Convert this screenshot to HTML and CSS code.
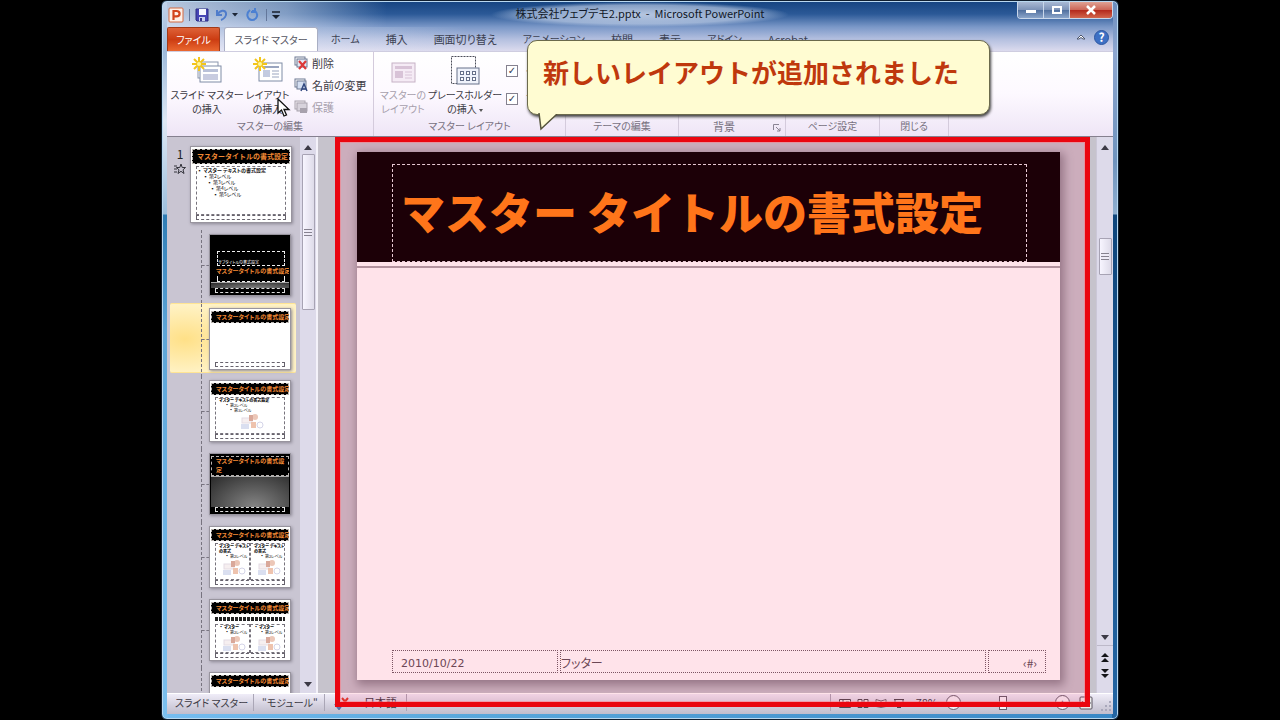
FILE: index.html
```html
<!DOCTYPE html>
<html lang="ja">
<head>
<meta charset="utf-8">
<title>株式会社ウェブデモ2.pptx - Microsoft PowerPoint</title>
<link rel="stylesheet" href="styles.css">
</head>
<body>
<svg class="defs" width="0" height="0" aria-hidden="true">
  <defs>
    <g id="burst" stroke="#f2c51c" stroke-width="2"><path d="M6 -1V13M-1 6H13M1 1L11 11M11 1L1 11"/><circle cx="6" cy="6" r="2" fill="#fff79a" stroke="none"/></g>
    <g id="pics"><rect x="2" y="5" width="10" height="5" fill="#f6eff0" stroke="#e4dbe3"/><circle cx="15" cy="4" r="3" fill="#ecc7b8"/><rect x="9" y="2" width="4" height="6" fill="#d9a89a"/><rect x="1" y="11" width="8" height="5" fill="#dadff0"/><rect x="11" y="9" width="5" height="6" fill="#eec3ae"/><circle cx="20" cy="12" r="3" fill="none" stroke="#d4d4e8"/></g>
  </defs>
</svg>
<div class="window">
  <header class="titlebar">
    <div class="quick">
      <svg width="16" height="16" viewBox="0 0 16 16"><rect x="1" y="1" width="14" height="14" rx="1" fill="#fdf0e8" stroke="#d36a42"/><path d="M5.500 13V4H8.500C12.600 4 12.600 9.300 8.500 9.300H5.500" fill="none" stroke="#d2441c" stroke-width="2.200"/></svg>
      <i class="bar"></i>
      <button class="plain" aria-label="上書き保存"><svg width="14" height="14" viewBox="0 0 14 14"><path d="M1 1H13V13H2L1 12Z" fill="#4545b5" stroke="#2d2c83"/><rect x="4" y="1" width="7" height="6" fill="#f4f6ff"/><rect x="4" y="9" width="6" height="4" fill="#c8d0ef"/><rect x="5" y="10" width="2" height="3" fill="#35358e"/></svg></button>
      <button class="plain undo" aria-label="元に戻す"><svg width="22" height="14" viewBox="0 0 22 14"><path d="M1 2V7H6M1.500 6.500C4 2 9 1.500 10 5C10.800 8 8 11 5 12" fill="none" stroke="#4f7ccb" stroke-width="2"/><path d="M16 5H22L19 8.500Z" fill="#1d2636"/></svg></button>
      <button class="plain redo" aria-label="繰り返し"><svg width="13" height="14" viewBox="0 0 13 14"><path d="M4 2C-1 6 2 12 6 12C11 12 13 6 9 3L6 3M9 0V4H5" fill="none" stroke="#4c80d2" stroke-width="2"/></svg></button>
      <i class="bar"></i>
      <svg width="8" height="10" viewBox="0 0 8 10"><path d="M0 2H8" stroke="#18202e" stroke-width="1.500"/><path d="M0 5H8L4 9Z" fill="#18202e"/></svg>
    </div>
    <h1>株式会社ウェブデモ2.pptx&nbsp; - &nbsp;Microsoft PowerPoint</h1>
    <div class="controls">
      <button aria-label="最小化"><svg width="12" height="10" viewBox="0 0 12 10"><rect x="1" y="5" width="10" height="3" fill="#fff"/></svg></button>
      <button aria-label="最大化"><svg width="12" height="10" viewBox="0 0 12 10"><rect x="2" y="2" width="8" height="6" fill="none" stroke="#fff" stroke-width="2"/></svg></button>
      <button class="close" aria-label="閉じる"><svg width="12" height="10" viewBox="0 0 12 10"><path d="M2 1L10 9M10 1L2 9" stroke="#fff" stroke-width="2.500"/></svg></button>
    </div>
  </header>
  <nav class="tabs">
    <button class="file">ファイル</button>
    <button class="tab active">スライド マスター</button>
    <button class="tab">ホーム</button>
    <button class="tab kanji">挿入</button>
    <button class="tab kanji">画面切り替え</button>
    <button class="tab">アニメーション</button>
    <button class="tab kanji">校閲</button>
    <button class="tab kanji">表示</button>
    <button class="tab">アドイン</button>
    <button class="tab kanji">Acrobat</button>
    <span class="tabtools">
      <button class="plain" aria-label="リボンの最小化"><svg width="10" height="8" viewBox="0 0 10 8"><path d="M1 6L5 2L9 6H7L5 4.500L3 6Z" fill="#fff" stroke="#4d566c"/></svg></button>
      <button class="help" aria-label="ヘルプ">?</button>
    </span>
  </nav>
  <section class="ribbon">
    <div class="group g-edit">
      <div class="tools">
        <button class="big b1"><svg width="32" height="28" viewBox="0 0 32 28"><rect x="7" y="5" width="20" height="16" fill="#fff" stroke="#8a96ad"/><rect x="9" y="9" width="21" height="16" fill="#fff" stroke="#7f8ca6"/><rect x="12" y="12" width="15" height="3" fill="#b9c1d8"/><rect x="12" y="17" width="15" height="6" fill="#c8cce0"/><use href="#burst" x="2" y="1"/></svg><span>スライド マスター<br>の挿入</span></button>
        <button class="big b2"><svg width="32" height="28" viewBox="0 0 32 28"><rect x="7" y="6" width="23" height="18" fill="#fff" stroke="#7f8ca6"/><path d="M11 10H27" stroke="#9aa5bf" stroke-width="2"/><rect x="11" y="13" width="7" height="7" fill="#c3cbe0"/><path d="M20 14H27M20 17H27M20 20H27" stroke="#9aa5bf"/><use href="#burst" x="2" y="1"/></svg><span>レイアウト<br>の挿入</span></button>
        <div class="smalls">
          <button class="small"><svg width="14" height="14" viewBox="0 0 14 14"><rect x="1" y="1" width="10" height="8" fill="#fff" stroke="#6d7892"/><rect x="3" y="3" width="10" height="8" fill="#e3e9f5" stroke="#6d7892"/><path d="M5 5L12 13M12 5L5 13" stroke="#dc3838" stroke-width="2.200"/></svg>削除</button>
          <button class="small"><svg width="14" height="14" viewBox="0 0 14 14"><rect x="1" y="1" width="10" height="8" fill="#fff" stroke="#6d7892"/><rect x="3" y="3" width="9" height="8" fill="#d4dff2" stroke="#6d7892"/><path d="M7 13L10 6L13 13M8 11H12" fill="none" stroke="#354b82" stroke-width="1.500"/></svg>名前の変更</button>
          <button class="small" disabled><svg width="14" height="14" viewBox="0 0 14 14"><rect x="1" y="1" width="10" height="8" fill="#eee9ef" stroke="#a9a3ae"/><rect x="3" y="3" width="10" height="8" fill="#d8d3dc" stroke="#a9a3ae"/><rect x="6" y="8" width="7" height="5" fill="#a8a2ad"/></svg>保護</button>
        </div>
      </div>
      <h2>マスターの編集</h2>
    </div>
    <div class="group g-layout">
      <div class="tools">
        <button class="big b3" disabled><svg width="32" height="28" viewBox="0 0 32 28"><rect x="5" y="6" width="23" height="19" fill="#f5ebf5" stroke="#c6b2c6"/><rect x="8" y="9" width="17" height="3" fill="#d8c3d7"/><rect x="8" y="14" width="8" height="7" fill="#d8c3d7"/><path d="M18 15H25M18 18H25M18 21H25" stroke="#d8c3d7"/></svg><span>マスターの<br>レイアウト</span></button>
        <button class="big b4"><svg width="32" height="32" viewBox="0 0 32 32"><rect x="2.500" y="1.500" width="24" height="27" fill="none" stroke="#4b4d58" stroke-dasharray="2 1"/><rect x="8" y="13" width="22" height="16" fill="#eff2fb" stroke="#66708a"/><g fill="#fff" stroke="#66708a"><rect x="11.500" y="16.500" width="3" height="3"/><rect x="17.500" y="16.500" width="3" height="3"/><rect x="23.500" y="16.500" width="3" height="3"/><rect x="11.500" y="22.500" width="3" height="3"/><rect x="17.500" y="22.500" width="3" height="3"/><rect x="23.500" y="22.500" width="3" height="3"/></g></svg><span>プレースホルダー<br>の挿入 <b class="drop"></b></span></button>
        <div class="checks">
          <label><input type="checkbox" checked>タイトル</label>
          <label><input type="checkbox" checked>フッター</label>
        </div>
      </div>
      <h2>マスター レイアウト</h2>
    </div>
    <div class="group g-theme"><h2>テーマの編集</h2></div>
    <div class="group g-back"><h2>背景</h2><svg class="launcher" width="8" height="8" viewBox="0 0 8 8"><path d="M.5 6V.5H6M3 3L7 7M7 4V7H4" fill="none" stroke="#8a8494"/></svg></div>
    <div class="group g-page"><h2>ページ設定</h2></div>
    <div class="group g-close"><h2>閉じる</h2></div>
  </section>
  <main class="work">
    <aside class="pane">
      <ol class="list">
        <li class="master">
          <div class="num">1<svg width="12" height="12" viewBox="0 0 12 12"><path d="M7 1L8.200 4.500H11.500L9 6.800L10 10.500L7 8.300L4 10.500L5 6.800L2.500 4.500H5.800Z" fill="none" stroke="#33333b"/><path d="M0 3H3M0 6H3M0 9H3" stroke="#33333b"/></svg></div>
          <div class="thumb large">
            <div class="cap">マスタータイトルの書式設定</div>
            <div class="body dash">▪ マスター テキストの書式設定<p>▪ 第2レベル</p><p class="i2">▪ 第3レベル</p><p class="i3">▪ 第4レベル</p><p class="i4">▪ 第5レベル</p></div>
            <div class="foot"></div>
          </div>
        </li>
        <li><i class="tree"></i><div class="thumb dark first"><div class="box dash"><small>サブタイトルの書式設定</small></div><div class="cap low">マスタータイトルの書式設定</div><div class="under"></div><div class="grey"></div><div class="foot"></div></div></li>
        <li class="selected"><i class="tree"></i><div class="thumb"><div class="cap">マスタータイトルの書式設定</div><div class="body"></div><div class="foot"></div></div></li>
        <li><i class="tree"></i><div class="thumb"><div class="cap">マスタータイトルの書式設定</div><div class="body dash mini"><b>マスター テキストの書式設定</b><p>▪ 第2レベル</p><p class="i2">▪ 第3レベル</p><svg class="pic" width="24" height="16" viewBox="0 0 24 16"><use href="#pics"/></svg></div><div class="foot"></div></div></li>
        <li><i class="tree"></i><div class="thumb dark"><div class="cap two">マスタータイトルの書式設定</div><div class="grey"></div><div class="foot"></div></div></li>
        <li><i class="tree"></i><div class="thumb"><div class="cap">マスタータイトルの書式設定</div><div class="pair"><div class="body dash mini"><b>マスター テキスト<br>の書式</b><p>▪ 第2レベル</p><svg class="pic" width="24" height="16" viewBox="0 0 24 16"><use href="#pics"/></svg></div><div class="body dash mini"><b>マスター テキスト<br>の書式</b><p>▪ 第2レベル</p><svg class="pic" width="24" height="16" viewBox="0 0 24 16"><use href="#pics"/></svg></div></div><div class="foot"></div></div></li>
        <li><i class="tree"></i><div class="thumb"><div class="cap">マスタータイトルの書式設定</div><div class="rule"></div><div class="pair"><div class="body dash mini"><b>▪ マスター</b><p>▪ 第2レベル</p><svg class="pic" width="24" height="16" viewBox="0 0 24 16"><use href="#pics"/></svg></div><div class="body dash mini"><b>▪ マスター</b><p>▪ 第2レベル</p><svg class="pic" width="24" height="16" viewBox="0 0 24 16"><use href="#pics"/></svg></div></div><div class="foot"></div></div></li>
        <li><i class="tree"></i><div class="thumb"><div class="cap">マスタータイトルの書式設定</div><div class="body"></div></div></li>
      </ol>
      <div class="scroll left"><i class="up"></i><i class="knob"><i class="grip"></i></i><i class="down"></i></div>
    </aside>
    <section class="stage">
      <article class="slide">
        <div class="banner"><div class="title">マスター タイトルの書式設定</div></div>
        <div class="content"></div>
        <footer class="fields"><span class="date">2010/10/22</span><span class="footer">フッター</span><span class="page">‹#›</span></footer>
      </article>
    </section>
    <div class="scroll right"><i class="up"></i><i class="knob"><i class="grip"></i></i><i class="down"></i><span class="jump"><svg width="10" height="28" viewBox="0 0 10 28"><path d="M1 5L5 1L9 5ZM1 10L5 6L9 10ZM1 17H9L5 21ZM1 22H9L5 26Z" fill="#141418"/></svg></span></div>
  </main>
  <footer class="status">
    <span class="cell s1">スライド マスター</span>
    <span class="cell s2">"モジュール"</span>
    <span class="cell s3"><svg width="18" height="14" viewBox="0 0 18 14"><path d="M2 8L6 13L9 9" fill="none" stroke="#5570a8" stroke-width="2"/><path d="M9 2L15 9M15 2L9 9" stroke="#dc3c2c" stroke-width="2"/></svg>日本語</span>
    <span class="fill"></span>
    <span class="views">
      <svg width="12" height="10" viewBox="0 0 12 10"><path d="M.5 1.500H11.500V9.500H.5ZM4 2V9M7 4H10" fill="#eee" stroke="#4f4953"/></svg>
      <svg width="12" height="10" viewBox="0 0 12 10"><path d="M1 1.500H5V4.500H1ZM7 1.500H11V4.500H7ZM1 6.500H5V9.500H1ZM7 6.500H11V9.500H7Z" fill="#eee" stroke="#4f4953"/></svg>
      <svg width="12" height="10" viewBox="0 0 12 10"><path d="M1 1.500L6 3L11 1.500V8.500L6 9.500L1 8.500ZM6 3V9" fill="#eee" stroke="#6f6973"/></svg>
      <svg width="12" height="10" viewBox="0 0 12 10"><path d="M1 1.500H11M2 2V6.500H10V2M6 7V10M4 9.500H8" fill="none" stroke="#4f4953"/></svg>
    </span>
    <span class="pct">78%</span>
    <button class="round" aria-label="縮小">−</button>
    <input class="zoom" type="range" min="0" max="100" value="43" aria-label="ズーム">
    <button class="round" aria-label="拡大">+</button>
    <svg width="14" height="14" viewBox="0 0 14 14"><rect x="1" y="1" width="12" height="12" rx="1" fill="#eee" stroke="#5b5561"/><path d="M3 5L5 7L3 9M6 7H12M9 3V11" fill="none" stroke="#5b5561"/></svg>
    <svg class="sizer" width="12" height="12" viewBox="0 0 12 12"><path d="M9 2h2v2h-2zM9 6h2v2h-2zM5 6h2v2h-2zM9 10h2v2h-2zM5 10h2v2h-2zM1 10h2v2h-2z" fill="#a9a8bb"/></svg>
  </footer>
  <div class="highlight"></div>
  <div class="callout">新しいレイアウトが追加されました<svg class="tail" width="30" height="19" viewBox="0 0 30 19"><path d="M7 0L9 16L25 1" fill="#fffcd2" stroke="#55543c" stroke-width="1.500"/><path d="M8 0H25V1H8Z" fill="#fffcd2"/></svg></div>
  <svg class="pointer" width="14" height="20" viewBox="0 0 14 20"><path d="M1 1V15L4.500 12L7 18L9.500 17L7 11.500H12Z" fill="#fff" stroke="#111" stroke-width="1.300"/></svg>
</div>
</body>
</html>
```

FILE: styles.css
```css
* { box-sizing: border-box; }
body { margin: 0; padding: 0 161px; background: #000; color: #3c3a44; font-family: "Noto Sans CJK JP", sans-serif; font-size: 12px; line-height: 14px; font-feature-settings: "palt"; }
button { font: inherit; font-feature-settings: inherit; color: inherit; border: 0; padding: 0; background: none; white-space: nowrap; }
h1, h2, p, ol { margin: 0; padding: 0; font-weight: normal; }
svg { display: block; flex: none; }
i { display: block; }
.defs { position: absolute; }
.window { position: relative; height: 100vh; display: flex; flex-direction: column; padding: 1px 5px 5px; border: 1px solid #101f30; border-radius: 6px; overflow: hidden;
  box-shadow: inset 0 0 0 1px #b9d8f0;
  background:
    linear-gradient(#c3d3ea, #9db9da 50px, #dfe8f4 120px, #9dbfdd 213px, #2e7cb4 214px, #5da5d8 330px, #7cc0ef) left / 6px 100% no-repeat,
    linear-gradient(#6a8cbd, #8ea7d0 50px, #6f93bd 160px, #8fafd0 213px, #0f467c 214px, #2365a3) right / 6px 100% no-repeat,
    linear-gradient(90deg, #76bdf0, #59a8dc 300px, #3988c6); }

.titlebar { display: grid; grid-template-columns: 1fr auto 1fr; height: 25px; flex: none; background: linear-gradient(90deg, rgba(235,240,250,.75), rgba(215,225,242,.5) 120px, transparent 220px), linear-gradient(#174582, #2b5997 12px, #7b98c8); }
.quick { display: flex; align-items: center; gap: 5px; padding-left: 1px; }
.quick .bar { width: 1px; height: 12px; background: #63779b; }
.quick .undo { margin-left: 2px; }
.quick .redo { margin: 0 2px 0 3px; }
.titlebar h1 { font-size: 11px; line-height: 22px; color: #111827; white-space: nowrap; background: radial-gradient(closest-side, rgba(205,216,236,.85), rgba(190,205,230,.65) 75%, transparent); padding: 0 24px; }
.controls { justify-self: end; display: flex; height: 17px; width: 96px; border: 1px solid #c9d7ea; border-top: 0; border-radius: 0 0 4px 4px; overflow: hidden; }
.controls button { width: 26px; display: grid; place-items: center; border-right: 1px solid #c9d7ea; background: linear-gradient(#a9b9d4, #7b91b6 50%, #506f9e 51%, #8ba5ca); }
.controls .close { flex: 1; border: 0; background: linear-gradient(#e0a294, #cc6455 50%, #b3281b 51%, #d2664d); }

.tabs { display: flex; height: 24px; flex: none; background: linear-gradient(90deg, rgba(235,240,250,.6), transparent 300px), linear-gradient(#7b98c8, #b3bfdf 12px, #dcdbee); }
.file { width: 53px; margin-right: 4px; color: #fff; border-radius: 2px 2px 0 0; border: 1px solid #a23a18; border-bottom: 0; background: linear-gradient(#de6238, #cc3c12 50%, #ea6830); font-size: 10px; }
.tab { padding: 0 13px; font-size: 10px; line-height: 20px; color: #3c4152; }
.tab.kanji { font-size: 11px; }
.tab.active { width: 94px; padding: 0; background: #fff; border: 1px solid #a9afc4; border-bottom: 0; border-radius: 3px 3px 0 0; color: #555662; }
.tabtools { margin-left: auto; display: flex; align-items: center; gap: 8px; padding: 0 4px 4px 0; }
.help { width: 15px; height: 15px; border-radius: 50%; background: #3d70c4; border: 1px solid #2c57a2; color: #fff; font-weight: bold; line-height: 12px; }

.ribbon { display: flex; height: 86px; flex: none; background: linear-gradient(#fff, #fdf9ff 50%, #eee5f6); border-bottom: 1px solid #85808f; border-top: 1px solid #cfcde0; }
.group { display: flex; flex-direction: column; justify-content: flex-end; border-right: 1px solid #d4cbdc; position: relative; }
.group h2 { text-align: center; font-size: 10px; line-height: 20px; color: #77717f; }
.g-edit { width: 207px; } .g-layout { width: 192px; } .g-theme { width: 113px; } .g-back { width: 107px; } .g-page { width: 94px; } .g-close { width: 69px; }
.g-back h2 { font-size: 11px; padding-right: 16px; }
.launcher { position: absolute; right: 4px; bottom: 4px; }
.tools { display: flex; flex: 1; padding-top: 3px; }
.big { display: flex; flex-direction: column; align-items: center; font-size: 10px; line-height: 14px; }
.big svg { height: 32px; margin-bottom: 1px; }
.b1 { width: 80px; } .b2 { width: 41px; } .b3 { width: 56px; } .b4 { width: 68px; }
.g-layout .tools { padding-left: 1px; }
.drop { display: inline-block; border: 2px solid transparent; border-top: 3px solid #555; border-bottom: 0; vertical-align: middle; }
button:disabled { color: #a79fac; }
.smalls { display: flex; flex-direction: column; gap: 6px; padding-left: 6px; }
.small { display: flex; align-items: center; gap: 4px; font-size: 11px; line-height: 16px; }
.checks { display: flex; flex-direction: column; gap: 14px; padding: 9px 0 0 6px; }
.checks label { display: flex; align-items: center; gap: 7px; white-space: nowrap; font-size: 10px; }
.checks input { appearance: none; width: 12px; height: 12px; margin: 1px; border: 1px solid #85818f; background: #fff; display: grid; place-items: center; }
.checks input::before { content: "✓"; font: bold 10px/10px "DejaVu Sans", sans-serif; color: #333a50; }

.work { display: flex; flex: 1; min-height: 0; background: #c9c5d2; }
.pane { display: flex; width: 151px; border-right: 2px solid #f4f2fa; }
.list { list-style: none; flex: 1; min-width: 0; overflow: hidden; padding: 0 4px 0 3px; }
.list li { display: grid; grid-template-columns: 31px 8px 82px; height: 70px; margin-bottom: 3px; align-items: start; }
.list li.master { display: flex; height: 90px; margin-bottom: 3px; }
.num { width: 20px; display: flex; flex-direction: column; align-items: center; gap: 2px; padding: 10px 0 0; color: #222; }
.list li.selected { background: radial-gradient(ellipse 60px 34px at 15px 35px, #ffe087, transparent), #fff2c4; border: 2px solid #ffe594; border-width: 1px 0; border-radius: 2px; }
.tree { grid-column: 2; height: 73px; border-left: 1px dashed #77737f; }
.tree::before { content: ""; display: block; height: 35px; border-bottom: 1px dashed #77737f; }
.thumb { width: 82px; height: 62px; margin-top: 4px; padding: 2px 1px; overflow: hidden; background: #fff; border: 1px solid #98949e; box-shadow: 1px 1px 3px #8b8794; display: flex; flex-direction: column; }
.thumb.large { width: 102px; height: 77px; margin-top: 9px; }
.cap { height: 12px; flex: none; padding-left: 1px; border-left: 4px solid #000; color: #f28a35; background: #000; outline: 1px dashed #b9b4b0; outline-offset: -1px; font-size: 6px; line-height: 12px; font-weight: bold; white-space: nowrap; overflow: hidden; }
.large .cap { height: 15px; font-size: 7px; line-height: 15px; font-feature-settings: normal; }
.cap.two { height: 20px; white-space: normal; line-height: 9px; }
.cap.low { outline: 0; height: 10px; line-height: 10px; }
.under { height: 6px; flex: none; margin: 0 4px 0 6px; border: 1px dashed #eee; border-top: 0; }
.dash { border: 1px dashed #77737c; }
.body { flex: 1; margin: 2px 4px 0; font-size: 5px; line-height: 6px; color: #111; white-space: nowrap; overflow: hidden; font-weight: bold; }
.body p { padding-left: 6px; } .body .i2 { padding-left: 10px; } .body .i3 { padding-left: 13px; } .body .i4 { padding-left: 16px; }
.mini { font-size: 4px; line-height: 5px; padding-left: 3px; }
.pic { margin: 0 auto; }
.pair { display: grid; grid-template-columns: 1fr 1fr; flex: 1; padding: 0 4px; min-height: 0; }
.pair .body { margin: 2px 0 0; min-width: 0; }
.rule { height: 5px; margin: 3px 4px 0; background: repeating-linear-gradient(90deg, #222 0 3px, #fff 3px 4px); border-bottom: 1px solid #fff; }
.foot { flex: none; height: 5px; margin: 0 4px; border: 1px dashed #66626c; }
.dark { background: #000; }
.dark .foot { border-color: #ddd; }
.dark .box { flex: none; height: 15px; margin: 14px 4px 0 6px; border-color: #eee; color: #fff; font-size: 4px; line-height: 4px; padding-top: 8px; overflow: hidden; }
.box small { font-size: 4px; display: block; white-space: nowrap; }
.grey { flex: 1; border-top: 1px solid #aaa; background: radial-gradient(ellipse at 55% 100%, #858585, #2a2a2a); }
.scroll { display: flex; flex-direction: column; align-items: center; background: #dddaea; }
.scroll.left { width: 16px; padding-top: 8px; }
.scroll.right { width: 17px; margin-left: auto; padding-top: 8px; border-left: 1px solid #cbc7d7; }
.up, .down { border: 4px solid transparent; flex: none; }
.up { border-top: 0; border-bottom: 5px solid #3c3a46; }
.down { border-bottom: 0; border-top: 5px solid #3c3a46; margin-top: auto; }
.knob { width: 13px; display: grid; place-items: center; border: 1px solid #a7a3b4; border-radius: 1px; background: linear-gradient(90deg, #f7f5ff, #dedbe9); }
.left .knob { height: 156px; margin-top: 4px; }
.left .down { margin-bottom: 6px; }
.right .knob { height: 37px; margin-top: 88px; }
.grip { width: 8px; height: 7px; background: repeating-linear-gradient(#85818f 0 1px, #eeebf7 1px 3px); }
.jump { height: 48px; margin-top: 5px; padding-top: 6px; align-self: stretch; display: flex; justify-content: center; border-top: 1px solid #bdb9c9; }

.stage { flex: 1; min-width: 0; padding: 15px 36px 13px 39px; background: #c6c3cc; }
.slide { height: 100%; display: flex; flex-direction: column; background: #fff; box-shadow: 2px 3px 9px 2px #89848f; }
.banner { height: 111px; flex: none; padding: 12px 33px 0 35px; background: #000; border-bottom: 1px solid #fff; }
.title { height: 98px; border: 1px dashed #e4e0e4; padding-left: 8px; color: #ff8416; font-size: 44px; line-height: 92px; font-weight: 900; white-space: nowrap; font-feature-settings: normal; overflow: hidden; }
.content { flex: 1; margin-top: 3px; border-top: 2px solid #aaa4aa; }
.fields { display: grid; grid-template-columns: 166px 1fr 58px; gap: 2px; height: 23px; flex: none; margin: 0 14px 7px 35px; line-height: 23px; color: #5a5058; }
.fields span { border: 1px dotted #6c6068; overflow: hidden; }
.fields .date { padding-left: 8px; font-family: "DejaVu Sans", sans-serif; font-size: 11px; line-height: 25px; }
.fields .page { text-align: right; padding-right: 8px; }

.status { display: flex; height: 21px; flex: none; align-items: center; padding-bottom: 3px; background: linear-gradient(#f0edf8, #d2cfdd 60%, #c1bdcc); border-top: 1px solid #fff; font-size: 10px; line-height: 17px; }
.cell { height: 17px; border-right: 1px solid #aaa6b6; white-space: nowrap; padding-left: 8px; }
.s1 { width: 87px; } .s2 { width: 71px; } .s3 { width: 82px; display: flex; align-items: center; gap: 13px; font-size: 11px; }
.fill { flex: 1; height: 17px; border-right: 1px solid #aaa6b6; }
.views { display: flex; gap: 6px; padding: 0 11px 0 8px; }
.pct { font-size: 11px; margin-right: 8px; }
.round { width: 15px; height: 15px; border: 1px solid #66606e; border-radius: 50%; background: #f4f1f8; font-weight: bold; line-height: 12px; }
.zoom { appearance: none; width: 86px; height: 15px; margin: 0 4px; background: linear-gradient(#817c89, #817c89) center / 100% 1px no-repeat; }
.zoom::-webkit-slider-thumb { appearance: none; width: 8px; height: 14px; border: 1px solid #66606e; background: #f6f4fa; }
.round + svg { margin-left: 9px; }
.sizer { margin: 0 1px 0 7px; align-self: end; }

.highlight { position: absolute; left: 173px; right: 28px; top: 136px; bottom: 12px; border: 5px solid #ea0610; background: rgba(255,0,60,.11); box-shadow: inset 0 0 0 1px rgba(255,120,130,.5); }
.callout { position: absolute; left: 365px; top: 39px; width: 463px; height: 75px; padding-left: 15px; border: 1px solid #6b6a4c; border-radius: 10px; background: #fffcd2; box-shadow: 1px 2px 3px #444; color: #bf380d; font-size: 26px; line-height: 62px; font-weight: bold; font-feature-settings: normal; white-space: nowrap; }
.tail { position: absolute; left: 4px; top: 72px; }
.pointer { position: absolute; left: 115px; top: 97px; }
```
